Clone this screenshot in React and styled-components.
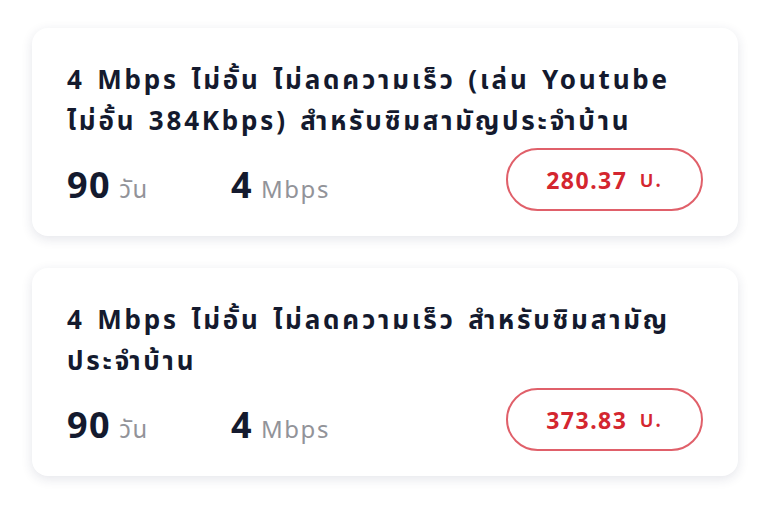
import React from "react";
import styled, { createGlobalStyle } from "styled-components";

const Global = createGlobalStyle`
  html, body { margin: 0; padding: 0; background: #ffffff; }
  body { font-family: "Noto Sans", "Noto Sans Thai", "Noto Sans Thai Looped", sans-serif; }
`;

const Page = styled.div`
  display: flex;
  flex-direction: column;
  gap: 32px;
  padding: 28px 32px;
`;

const Card = styled.div`
  background: #fff;
  border-radius: 16px;
  box-shadow: 0 3px 12px rgba(30, 40, 80, 0.12);
  padding: 31px 35px 25px 35px;
  display: flex;
  flex-direction: column;
  gap: 7px;
`;

const Title = styled.div`
  font-size: 26px;
  font-weight: 700;
  line-height: 41px;
  color: #141a2e;
  letter-spacing: 2.8px;
  word-spacing: 3px;
`;

const Keep = styled.span`
  white-space: nowrap;
`;

const Bottom = styled.div`
  display: flex;
  align-items: center;
  justify-content: space-between;
`;

const Stats = styled.div`
  display: flex;
  align-items: baseline;
  padding-top: 10px;
`;

const Stat = styled.div`
  display: flex;
  align-items: baseline;
  gap: 8px;
  min-width: 164px;
`;

const Value = styled.span`
  font-size: 36px;
  font-weight: 700;
  color: #141a2e;
  letter-spacing: 1.5px;
`;

const Unit = styled.span`
  font-size: 24px;
  color: #929399;
  letter-spacing: 1.5px;
`;

const Price = styled.div`
  width: 197px;
  height: 63px;
  box-sizing: border-box;
  border: 2.5px solid #e0606a;
  border-radius: 32px;
  display: flex;
  align-items: center;
  justify-content: center;
  gap: 12px;
  color: #d4262f;
  font-size: 23px;
  letter-spacing: 1.5px;
`;

const Amount = styled.span`
  font-weight: 700;
`;

const Currency = styled.span`
  font-weight: 500;
`;

const packages = [
  {
    title: [
      "4 Mbps ",
      <Keep key="a">ไม่อั้น</Keep>,
      " ไม่ลดความเร็ว (เล่น Youtube ",
      <Keep key="b">ไม่อั้น</Keep>,
      " 384Kbps) สำหรับซิมสามัญประจำบ้าน",
    ],
    days: 90,
    speed: 4,
    price: "280.37",
  },
  {
    title: [
      "4 Mbps ",
      <Keep key="a">ไม่อั้น</Keep>,
      " ไม่ลดความเร็ว สำหรับซิมสามัญประจำบ้าน",
    ],
    days: 90,
    speed: 4,
    price: "373.83",
  },
];

export default function App() {
  return (
    <>
      <Global />
      <Page>
        {packages.map((p, i) => (
          <Card key={i}>
            <Title>{p.title}</Title>
            <Bottom>
              <Stats>
                <Stat>
                  <Value>{p.days}</Value>
                  <Unit>วัน</Unit>
                </Stat>
                <Stat>
                  <Value>{p.speed}</Value>
                  <Unit>Mbps</Unit>
                </Stat>
              </Stats>
              <Price>
                <Amount>{p.price}</Amount>
                <Currency>บ.</Currency>
              </Price>
            </Bottom>
          </Card>
        ))}
      </Page>
    </>
  );
}
